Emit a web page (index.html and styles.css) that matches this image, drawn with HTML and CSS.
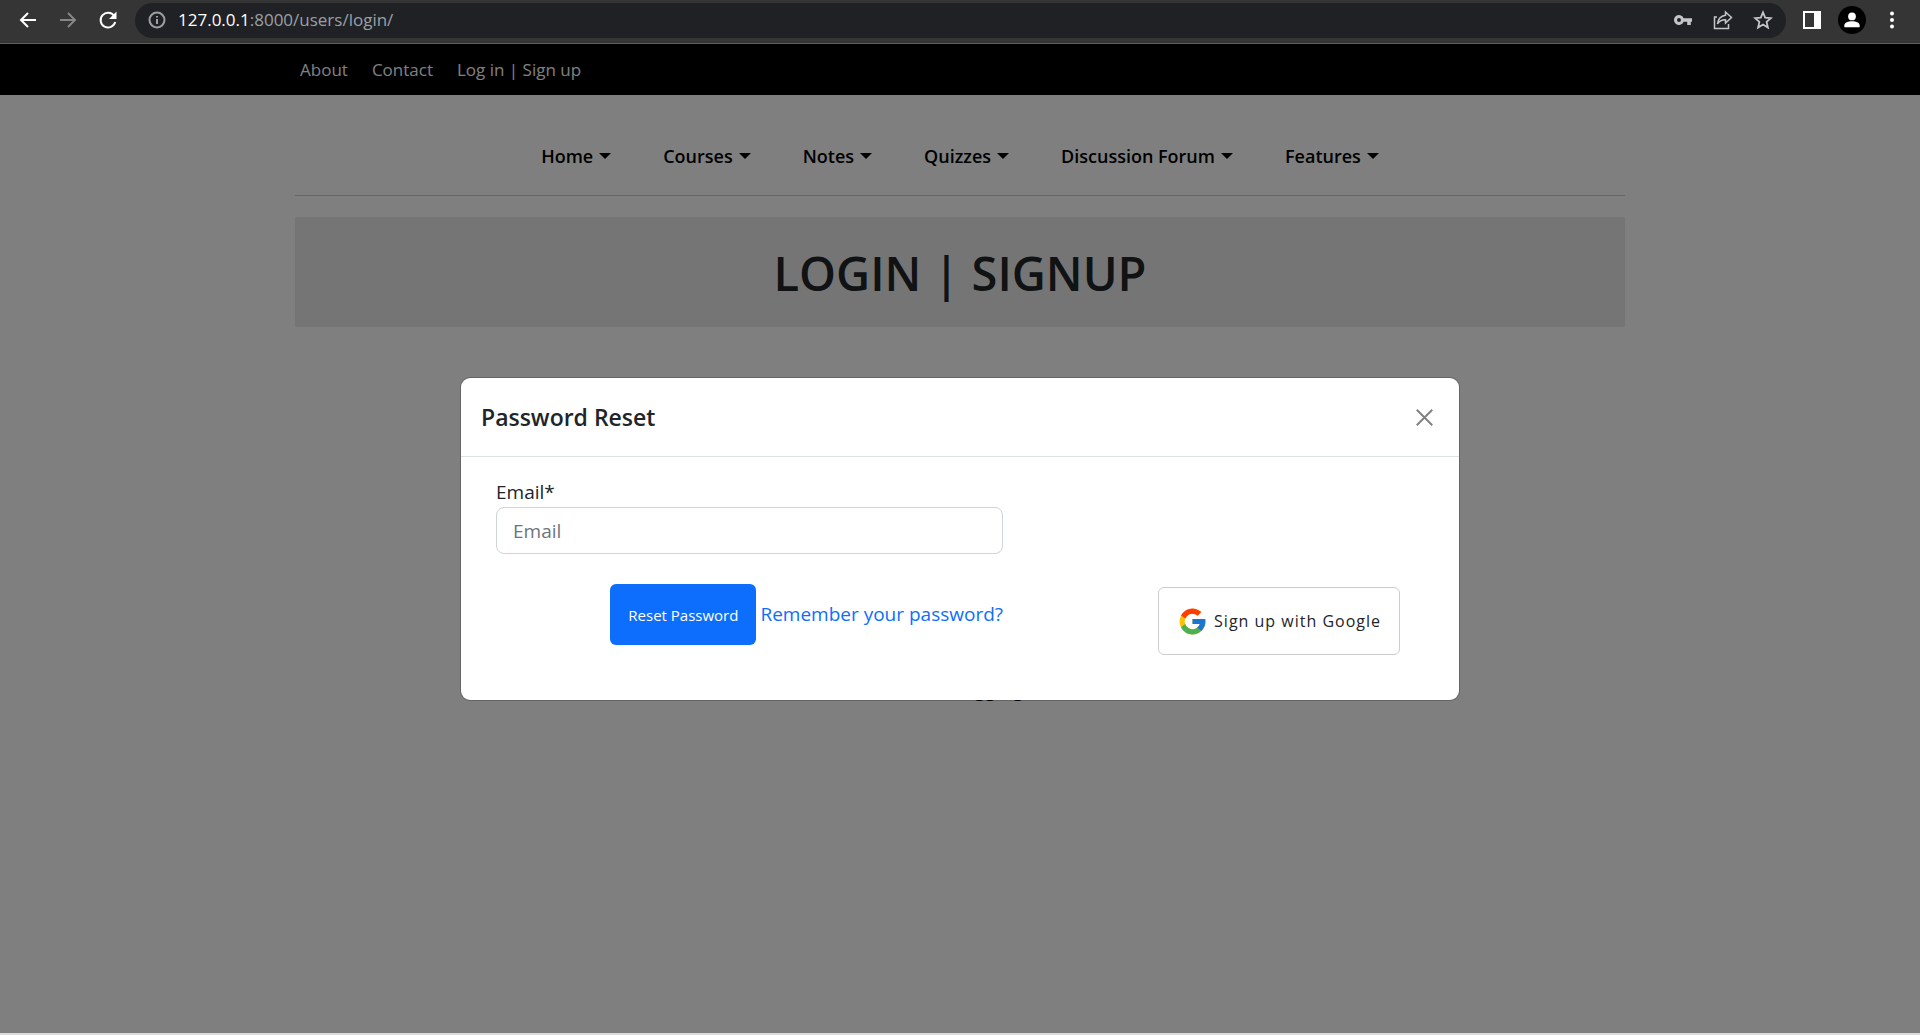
FILE: index.html
```html
<!DOCTYPE html>
<html lang="en">
<head>
<meta charset="utf-8">
<title>Login | Signup</title>
<link rel="stylesheet" href="styles.css">
</head>
<body>
<div class="browser-bar">
  <button class="tool" aria-label="Back"><svg viewBox="0 0 20 20"><path d="M18 10H3M10 3l-7 7 7 7"/></svg></button>
  <button class="tool tool-dim" aria-label="Forward"><svg viewBox="0 0 20 20"><path d="M2 10h15M10 3l7 7-7 7"/></svg></button>
  <button class="tool" aria-label="Reload"><svg viewBox="0 0 20 20"><path d="M16.200 6A7.400 7.400 0 1 0 17.200 12"/><path class="solid" d="M18.500 1.500v7.500H11z"/></svg></button>
  <div class="address">
    <svg class="info" viewBox="0 0 18 18"><circle cx="9" cy="9" r="7.500"/><path d="M9 8v5M9 5v1.600"/></svg>
    <span class="url"><span class="host">127.0.0.1</span>:8000/users/login/</span>
    <button class="tool tool-soft" aria-label="Saved passwords"><svg viewBox="0 0 20 20"><path class="solid" fill-rule="evenodd" d="M10.600 8.200H19v3.600h-1.200V15h-3.600v-3.200h-3.600A5 5 0 1 1 10.600 8.200zM6 8a2 2 0 1 0 0 4 2 2 0 0 0 0-4z"/></svg></button>
    <button class="tool tool-soft" aria-label="Share"><svg class="thin" viewBox="0 0 20 20"><path d="M4 7H1.500v11.500h14V14M12.500 2l6 5.500-6 5.500V9.700C8.500 9.700 6 11 4.500 14 5 9 8 6 12.500 5.300z"/></svg></button>
    <button class="tool tool-soft" aria-label="Bookmark"><svg class="medium" viewBox="0 0 20 20"><path d="M10 2.300l2.200 5.300 5.700.5-4.300 3.800 1.300 5.600L10 14.500l-4.900 3 1.300-5.600-4.300-3.800 5.700-.5z"/></svg></button>
  </div>
  <div class="browser-actions">
    <button class="tool" aria-label="Side panel"><svg viewBox="0 0 20 20"><path d="M2 2h16v16H2z"/><path class="solid" d="M12 2h6v16h-6z"/></svg></button>
    <button class="tool profile" aria-label="Profile"><svg viewBox="0 0 20 20"><circle class="solid" cx="10" cy="6" r="4.300"/><path class="solid" d="M1.500 18v-2c0-3 4.500-4.500 8.500-4.500s8.500 1.500 8.500 4.500v2z"/></svg></button>
    <button class="tool" aria-label="Menu"><svg viewBox="0 0 20 20"><circle class="solid" cx="10" cy="3.500" r="2"/><circle class="solid" cx="10" cy="10" r="2"/><circle class="solid" cx="10" cy="16.500" r="2"/></svg></button>
  </div>
</div>

<div class="viewport">
  <header class="topbar">
    <nav class="container topbar-links">
      <a href="#">About</a>
      <a href="#">Contact</a>
      <a href="#">Log in | Sign up</a>
    </nav>
  </header>
  <main class="container">
    <nav class="menu">
      <button>Home</button>
      <button>Courses</button>
      <button>Notes</button>
      <button>Quizzes</button>
      <button>Discussion Forum</button>
      <button>Features</button>
    </nav>
    <h1 class="banner">LOGIN | SIGNUP</h1>
    <p class="notice">Problems logging in?</p>
  </main>

  <div class="backdrop">
    <section class="modal" role="dialog" aria-labelledby="modal-title">
      <div class="modal-header">
        <h2 id="modal-title">Password Reset</h2>
        <button class="close" aria-label="Close"><svg viewBox="0 0 16 16"><path d="M.7.700l14.600 14.600M15.300.700L.7 15.300"/></svg></button>
      </div>
      <div class="modal-body">
        <form class="reset-form">
          <label for="email">Email*</label>
          <input id="email" type="email" placeholder="Email">
          <div class="actions">
            <button type="button" class="primary">Reset Password</button>
            <a href="#">Remember your password?</a>
          </div>
        </form>
        <button class="google">
          <svg viewBox="0 0 48 48"><path fill="#ffc107" d="M43.600 20H24v8h11.300C33.700 32.700 29.200 36 24 36c-6.600 0-12-5.400-12-12s5.400-12 12-12c3.100 0 5.800 1.200 8 3l5.600-5.600A20 20 0 1 0 43.600 20z"/><path fill="#ff3d00" d="M6.300 14.700l6.600 4.800C14.700 15.100 19 12 24 12c3.100 0 5.800 1.200 8 3l5.600-5.600A20 20 0 0 0 6.300 14.700z"/><path fill="#4caf50" d="M24 44c5.200 0 9.900-2 13.400-5.200l-6.200-5.200A12 12 0 0 1 12.700 28l-6.500 5A20 20 0 0 0 24 44z"/><path fill="#1976d2" d="M43.600 20H24v8h11.300a12 12 0 0 1-4.100 5.600l6.200 5.200C37 39.200 44 34 44 24c0-1.300-.1-2.700-.4-4z"/></svg>
          Sign up with Google
        </button>
      </div>
    </section>
  </div>
</div>
</body>
</html>
```
FILE: styles.css
```css
* {
  box-sizing: border-box;
}

body {
  margin: 0;
  min-height: 100vh;
  display: flex;
  flex-direction: column;
  background: #dcdcdc;
  color: #212529;
  font: 19px/30px "Open Sans", "Noto Sans", sans-serif;
}

button {
  border: 0;
  padding: 0;
  background: none;
  color: inherit;
  font: inherit;
}

a {
  text-decoration: none;
}

/* Browser toolbar */
.browser-bar {
  display: flex;
  align-items: center;
  gap: 20px;
  height: 44px;
  padding: 0 18px 3px;
  background: #353535;
  border-bottom: 1px solid #5f5f5f;
  color: #fff;
}

.browser-actions {
  display: flex;
  align-items: center;
  gap: 16px;
}

.tool {
  display: flex;
  flex: none;
  color: #fff;
}

.tool svg {
  width: 20px;
  height: 20px;
  fill: none;
  stroke: currentColor;
  stroke-width: 2;
}

.tool .solid {
  fill: currentColor;
  stroke: none;
}

.tool .thin {
  stroke-width: 1.5;
}

.tool .medium {
  stroke-width: 1.8;
}

.tool-dim {
  color: #868686;
}

.tool-soft {
  color: #c4c5c7;
}

.address {
  display: flex;
  flex: 1;
  align-items: center;
  gap: 20px;
  height: 35px;
  margin: 0 -4px 0 -3px;
  padding: 0 13px;
  border-radius: 18px;
  background: #202124;
}

.info {
  width: 18px;
  height: 18px;
  margin-right: -8px;
  fill: none;
  stroke: #9aa0a6;
  stroke-width: 2;
}

.url {
  flex: 1;
  color: #9aa0a6;
  font-size: 17px;
}

.host {
  color: #fff;
}

.profile {
  width: 28px;
  height: 28px;
  align-items: center;
  justify-content: center;
  border-radius: 50%;
  background: #000;
}

.profile svg {
  width: 18px;
  height: 18px;
}

/* Page */
.viewport {
  position: relative;
  flex: 1;
  margin-bottom: 2px;
  background: #fff;
}

.container {
  width: 100%;
  max-width: 1330px;
  margin: 0 auto;
}

.topbar {
  background: #000;
}

.topbar-links {
  display: flex;
  gap: 24px;
  padding: 11px 5px 10px;
}

.topbar-links a {
  color: #fff;
  font-size: 17px;
}

.menu {
  display: flex;
  justify-content: center;
  gap: 52px;
  padding: 46px 0 24px;
  border-bottom: 1px solid #cbcbcb;
}

.menu button {
  display: flex;
  align-items: center;
  gap: 6px;
  color: #000;
  font-size: 18px;
  font-weight: 600;
}

.menu button::after {
  content: "";
  border: 6px solid transparent;
  border-top-color: #000;
  border-bottom: 0;
}

.banner {
  margin: 21px 0 0;
  padding: 26px 0 24px;
  background: #ebebeb;
  font-size: 47px;
  font-weight: 600;
  line-height: 60px;
  text-align: center;
}

.notice {
  margin: 347px 0 0;
  color: #000;
  font-weight: 600;
  text-align: center;
}

/* Password reset dialog */
.backdrop {
  position: absolute;
  inset: 0;
  padding-top: 333px;
  background: rgba(0, 0, 0, 0.5);
}

.modal {
  max-width: 1000px;
  margin: 0 auto;
  border: 1px solid rgba(0, 0, 0, 0.2);
  border-radius: 10px;
  background: #fff;
  background-clip: padding-box;
}

.modal-header {
  display: flex;
  align-items: center;
  justify-content: space-between;
  padding: 20px 26px 20px 20px;
  border-bottom: 1px solid #dee2e6;
}

.modal-header h2 {
  margin: 0;
  font-size: 23px;
  font-weight: 600;
  line-height: 38px;
}

.close {
  display: flex;
}

.close svg {
  width: 17px;
  height: 17px;
  stroke: #808080;
  stroke-width: 1.8;
}

.modal-body {
  display: flex;
  align-items: flex-end;
  justify-content: space-between;
  padding: 21px 59px 45px 35px;
}

.reset-form {
  display: flex;
  flex-direction: column;
  width: 507px;
}

.reset-form label {
  line-height: 29px;
}

.reset-form input {
  height: 47px;
  padding: 0 16px;
  border: 1px solid #ced4da;
  border-radius: 8px;
  color: #212529;
  font: inherit;
}

.reset-form input::placeholder {
  color: #6c757d;
}

.actions {
  display: flex;
  align-items: baseline;
  justify-content: flex-end;
  gap: 4px;
  padding: 30px 0 10px;
}

.actions a {
  color: #0d6efd;
}

.primary {
  height: 61px;
  padding: 0 18px;
  border-radius: 6px;
  background: #0d6efd;
  color: #fff;
  font-size: 15px;
}

.google {
  display: flex;
  align-items: center;
  gap: 6px;
  height: 68px;
  padding: 0 18px;
  border: 1px solid #ccc;
  border-radius: 6px;
  font-size: 16px;
  letter-spacing: 1px;
}

.google svg {
  width: 31px;
  height: 31px;
}
```
